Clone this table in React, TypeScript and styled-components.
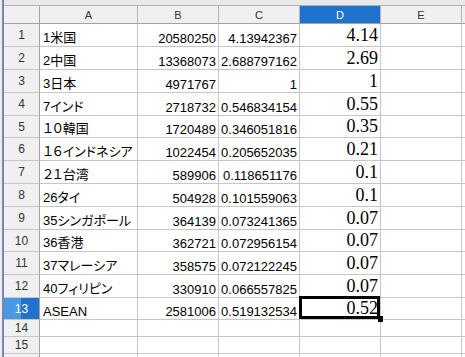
import styled, { createGlobalStyle, css } from "styled-components";

const GlobalStyle = createGlobalStyle`
    html, body {
        margin: 0;
        padding: 0;
        background: #fff;
    }
    body {
        font-family: "Liberation Sans", Arial, sans-serif;
    }
`;

type Kind = "text" | "num" | "serif";

type RowData = {
    h: number;
    a?: string;
    b?: string;
    c?: string;
    d?: string;
};

const COLS = [
    { key: "A", w: 98 },
    { key: "B", w: 81 },
    { key: "C", w: 81 },
    { key: "D", w: 81 },
    { key: "E", w: 81 },
];

const ROWS: RowData[] = [
    { h: 23, a: "1米国", b: "20580250", c: "4.13942367", d: "4.14" },
    { h: 23, a: "2中国", b: "13368073", c: "2.688797162", d: "2.69" },
    { h: 23, a: "3日本", b: "4971767", c: "1", d: "1" },
    { h: 23, a: "7インド", b: "2718732", c: "0.546834154", d: "0.55" },
    { h: 22, a: "１０韓国", b: "1720489", c: "0.346051816", d: "0.35" },
    { h: 23, a: "１６インドネシア", b: "1022454", c: "0.205652035", d: "0.21" },
    { h: 23, a: "２１台湾", b: "589906", c: "0.118651176", d: "0.1" },
    { h: 23, a: "26タイ", b: "504928", c: "0.101559063", d: "0.1" },
    { h: 23, a: "35シンガポール", b: "364139", c: "0.073241365", d: "0.07" },
    { h: 22, a: "36香港", b: "362721", c: "0.072956154", d: "0.07" },
    { h: 23, a: "37マレーシア", b: "358575", c: "0.072122245", d: "0.07" },
    { h: 23, a: "40フィリピン", b: "330910", c: "0.066557825", d: "0.07" },
    { h: 22, a: "ASEAN", b: "2581006", c: "0.519132534", d: "0.52" },
    { h: 17 },
    { h: 17 },
];

const SELECTED_ROW = 13;
const SELECTED_COL = "D";

const Window = styled.div`
    display: flex;
    width: 465px;
    height: 357px;
    overflow: hidden;
    background: #fff;
`;

const LeftEdge = styled.div`
    flex: none;
    width: 2px;
    background: #ececec;
    border-right: 2px solid #7d84b5;
`;

const Sheet = styled.div`
    flex: 1;
    display: flex;
    flex-direction: column;
    min-width: 0;
`;

const TopStrip = styled.div`
    flex: none;
    height: 5px;
    background: #e9e9e9;
`;

const HeaderRow = styled.div`
    flex: none;
    display: flex;
    height: 19px;
    box-sizing: border-box;
    border-top: 1px solid #b4b4b4;
    border-bottom: 1px solid #a2a2a2;
    background: #f0f0f0;
`;

const Corner = styled.div`
    flex: none;
    width: 36px;
    box-sizing: border-box;
    border-right: 1px solid #a2a2a2;
`;

const ColHeader = styled.div<{ $w: number; $active?: boolean }>`
    flex: none;
    width: ${(p) => p.$w}px;
    box-sizing: border-box;
    display: flex;
    align-items: center;
    justify-content: center;
    border-right: 1px solid #b4b4b4;
    font-size: 11px;
    color: #333;

    ${(p) =>
        p.$active &&
        css`
            background: #1f73cd;
            color: #fff;
        `}
`;

const HeaderFill = styled.div`
    flex: 1;
`;

const Row = styled.div<{ $h: number }>`
    flex: none;
    display: flex;
    height: ${(p) => p.$h}px;
`;

const RowHeader = styled.div<{ $active?: boolean }>`
    flex: none;
    width: 36px;
    box-sizing: border-box;
    display: flex;
    align-items: center;
    justify-content: center;
    background: #f0f0f0;
    border-right: 1px solid #a2a2a2;
    border-bottom: 1px solid #c6c6c6;
    font-size: 12px;
    color: #333;

    ${(p) =>
        p.$active &&
        css`
            background: linear-gradient(to right, #4a98e3 50%, #1f73cd 50%);
            color: #fff;
        `}
`;

const Cell = styled.div<{ $w: number; $kind?: Kind }>`
    position: relative;
    flex: none;
    width: ${(p) => p.$w}px;
    box-sizing: border-box;
    display: flex;
    align-items: flex-end;
    padding: 0 2px 0 3px;
    border-right: 1px solid #c6c6c6;
    border-bottom: 1px solid #c6c6c6;
    white-space: nowrap;
    color: #000;

    ${(p) => {
        if (p.$kind === "text") {
            return css`
                justify-content: flex-start;
                font-family: "Liberation Sans", "Noto Sans CJK JP", sans-serif;
                font-feature-settings: "palt";
                font-size: 13px;
            `;
        }
        if (p.$kind === "serif") {
            return css`
                justify-content: flex-end;
                font-family: "Liberation Serif", "Times New Roman", serif;
                font-size: 18px;
            `;
        }
        return css`
            justify-content: flex-end;
            font-size: 13px;
        `;
    }}
`;

const RowFill = styled.div`
    flex: 1;
    border-bottom: 1px solid #c6c6c6;
`;

// empty strip of the next row, cut by the window bottom
const TailRow = styled.div`
    flex: 1;
    display: flex;
`;

const TailHeader = styled.div`
    flex: none;
    width: 36px;
    box-sizing: border-box;
    background: #f0f0f0;
    border-right: 1px solid #a2a2a2;
`;

const TailCell = styled.div<{ $w: number }>`
    flex: none;
    width: ${(p) => p.$w}px;
    box-sizing: border-box;
    border-right: 1px solid #c6c6c6;
`;

// thick frame of the active cell and its fill handle
const CursorFrame = styled.div`
    position: absolute;
    left: -1px;
    top: -2px;
    right: 0;
    bottom: 0;
    border: 3px solid #000;
    pointer-events: none;
    z-index: 2;
`;

const FillHandle = styled.div`
    position: absolute;
    right: -3px;
    bottom: -3px;
    width: 5px;
    height: 6px;
    background: #000;
    z-index: 3;
`;

const kindOf = (key: string): Kind => {
    if (key === "A") return "text";
    if (key === "D") return "serif";
    return "num";
};

const valueOf = (row: RowData, key: string) => {
    if (key === "A") return row.a;
    if (key === "B") return row.b;
    if (key === "C") return row.c;
    if (key === "D") return row.d;
    return undefined;
};

const App = () => {
    return (
        <>
            <GlobalStyle />
            <Window>
                <LeftEdge />
                <Sheet>
                    <TopStrip />
                    <HeaderRow>
                        <Corner />
                        {COLS.map((col) => (
                            <ColHeader key={col.key} $w={col.w} $active={col.key === SELECTED_COL}>
                                {col.key}
                            </ColHeader>
                        ))}
                        <HeaderFill />
                    </HeaderRow>
                    {ROWS.map((row, i) => {
                        const num = i + 1;
                        return (
                            <Row key={num} $h={row.h}>
                                <RowHeader $active={num === SELECTED_ROW}>{num}</RowHeader>
                                {COLS.map((col) => {
                                    const selected = num === SELECTED_ROW && col.key === SELECTED_COL;
                                    return (
                                        <Cell key={col.key} $w={col.w} $kind={kindOf(col.key)}>
                                            {valueOf(row, col.key)}
                                            {selected && (
                                                <>
                                                    <CursorFrame />
                                                    <FillHandle />
                                                </>
                                            )}
                                        </Cell>
                                    );
                                })}
                                <RowFill />
                            </Row>
                        );
                    })}
                    <TailRow>
                        <TailHeader />
                        {COLS.map((col) => (
                            <TailCell key={col.key} $w={col.w} />
                        ))}
                    </TailRow>
                </Sheet>
            </Window>
        </>
    );
};

export default App;
